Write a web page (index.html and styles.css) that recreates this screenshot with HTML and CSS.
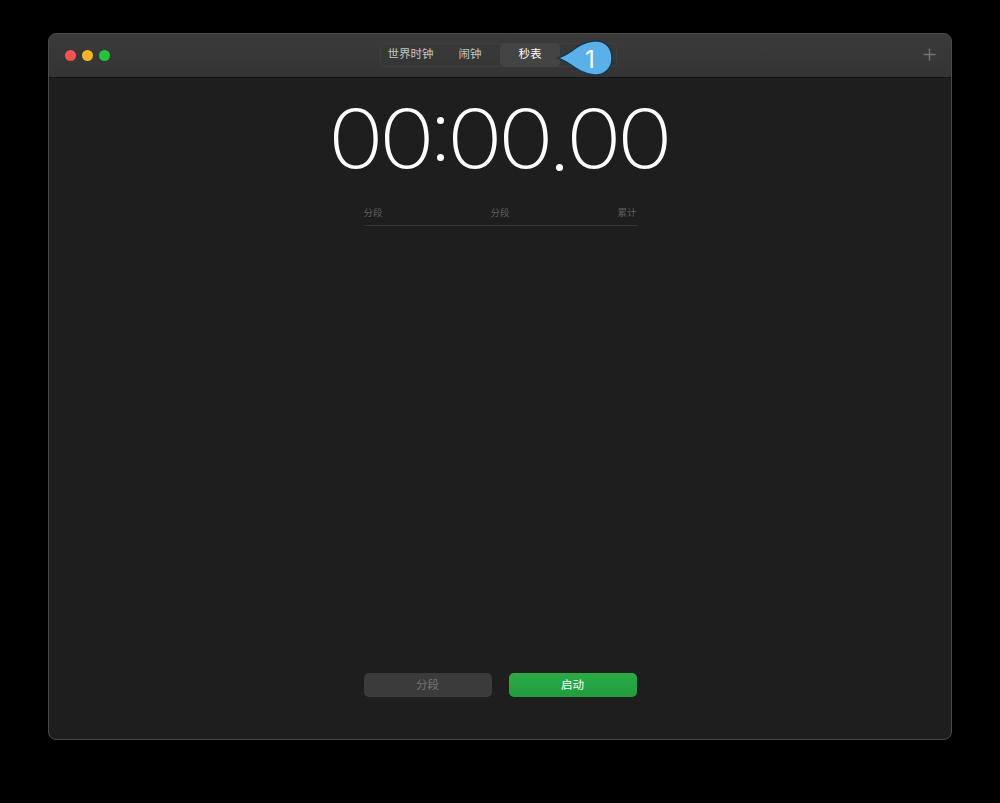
FILE: index.html
```html
<!DOCTYPE html>
<html lang="zh-CN">
<head>
    <meta charset="UTF-8">
    <meta name="viewport" content="width=device-width, initial-scale=1.0">
    <title>时钟</title>
    <link rel="stylesheet" href="styles.css">
</head>
<body>
    <div class="window">
        <div class="titlebar">
            <div class="lights">
                <span class="light red"></span>
                <span class="light yellow"></span>
                <span class="light green"></span>
            </div>
            <div class="tabs">
                <div class="tab tab-world">世界时钟</div>
                <div class="tab tab-alarm">闹钟</div>
                <div class="tab active">秒表</div>
                <div class="callout">
                    <svg width="60" height="40" viewBox="0 0 60 40">
                        <path class="callout-shape" d="M1 19 C14 17 21 3 38 2 C50 1 56 9 56 19 C56 29 49 37 38 36 C22 35 14 22 1 19 Z"/>
                    </svg>
                    <span class="callout-num">1</span>
                </div>
            </div>
            <div class="add">
                <svg width="13" height="13" viewBox="0 0 13 13">
                    <path d="M6.5 0.5 V12.5 M0.5 6.5 H12.5" stroke="#737373" stroke-width="1.4" fill="none"/>
                </svg>
            </div>
        </div>

        <div class="content">
            <div class="timer">
                <span class="digits">00</span>
                <span class="colon"><i></i><i></i></span>
                <span class="digits">00</span>
                <span class="dot"><i></i></span>
                <span class="digits">00</span>
            </div>

            <div class="laps">
                <span>分段</span>
                <span>分段</span>
                <span>累计</span>
            </div>

            <div class="buttons">
                <button class="btn btn-lap">分段</button>
                <button class="btn btn-start">启动</button>
            </div>
        </div>
    </div>
</body>
</html>
```

FILE: styles.css
```css
body {
    margin: 0;
    padding: 33px 48px 0;
    height: 803px;
    box-sizing: border-box;
    background-color: #000;
    font-family: "Liberation Sans", "Noto Sans CJK SC", sans-serif;
    overflow: hidden;
}

.window {
    height: 707px;
    display: flex;
    flex-direction: column;
    background-color: #1e1e1e;
    border: 1px solid #4a4a4a;
    border-radius: 8px;
    box-sizing: border-box;
    overflow: hidden;
}

.titlebar {
    height: 43px;
    flex: none;
    display: grid;
    grid-template-columns: 1fr auto 1fr;
    align-items: center;
    background: linear-gradient(#3b3b3b, #343434);
    border-bottom: 1px solid #141414;
}

.lights {
    display: flex;
    gap: 6px;
    padding-left: 16px;
}

.light {
    width: 11px;
    height: 11px;
    border-radius: 50%;
}

.red { background-color: #f5544f; }
.yellow { background-color: #f9b428; }
.green { background-color: #27c33c; }

.tabs {
    position: relative;
    display: flex;
    align-items: center;
    height: 24px;
    width: 237px;
    margin-left: -3px;
    margin-top: -2px;
    border: 1px solid #3f3f3f;
    border-radius: 4px;
    box-sizing: border-box;
    color: #c4c4c4;
    font-size: 11.5px;
}

.tab {
    height: 24px;
    line-height: 23px;
    text-align: center;
    flex: none;
}

.tab-world { width: 59px; }
.tab-alarm { width: 60px; }

.tab.active {
    width: 60px;
    background-color: #444;
    border-radius: 5px;
    color: #fff;
}

.callout {
    position: absolute;
    left: 175px;
    top: -5px;
    width: 60px;
    height: 40px;
}

.callout svg {
    display: block;
}

.callout-shape {
    fill: #5bb0e8;
    stroke: #17384f;
    stroke-width: 1.5;
}

.callout-num {
    position: absolute;
    left: 29px;
    top: 6px;
    color: #fff;
    font-family: Inter, sans-serif;
    font-size: 24px;
    line-height: 30px;
}

.add {
    display: flex;
    justify-content: flex-end;
    padding-right: 15px;
    margin-top: -2px;
}

.add svg {
    display: block;
}

.content {
    flex: 1;
    display: flex;
    flex-direction: column;
    align-items: center;
    padding-bottom: 42px;
}

.timer {
    display: flex;
    height: 100px;
    margin-top: 11px;
    color: #fff;
    font-family: Inter, sans-serif;
    font-weight: 200;
    font-size: 81px;
    line-height: 100px;
}

/* digits are stretched sideways to get the round zero, Inter's is narrower */
.digits {
    width: 90px;
    margin: 0 6px;
    letter-spacing: -4.6px;
    text-indent: -1.3px;
    white-space: nowrap;
    transform: scaleX(1.15);
}

.colon, .dot {
    position: relative;
    width: 17px;
}

.colon i, .dot i {
    position: absolute;
    left: 5px;
    width: 7px;
    height: 7px;
    border-radius: 50%;
    background-color: #fff;
}

.colon i:first-child { top: 28px; }
.colon i:last-child { top: 65px; }
.dot i { top: 75px; }

.laps {
    width: 273px;
    margin-top: 17px;
    padding-bottom: 5px;
    display: flex;
    justify-content: space-between;
    border-bottom: 1px solid #363636;
    color: #5e5e5e;
    font-size: 9.5px;
    line-height: 14px;
}

.buttons {
    margin-top: auto;
    display: flex;
    gap: 17px;
}

.btn {
    width: 128px;
    height: 24px;
    padding: 0 0 2px;
    border: none;
    border-radius: 5px;
    font-family: inherit;
    font-size: 11.5px;
}

.btn-lap {
    background-color: #3b3b3b;
    color: #737373;
}

.btn-start {
    background: linear-gradient(#2bab48, #219c3d);
    color: #fff;
}
```
